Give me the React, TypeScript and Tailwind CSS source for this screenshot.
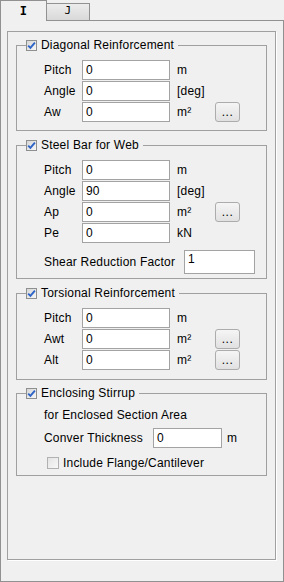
import React from "react";

const Check = ({ checked = true, className = "" }: { checked?: boolean; className?: string }) => (
  <span
    className={`flex w-[11px] h-[11px] shrink-0 items-center justify-center border border-[#8e8f8f] bg-linear-to-br from-[#d6d6d6] to-[#f7f7f7] ${className}`}
  >
    {checked && (
      <svg width="9" height="9" viewBox="0 0 9 9">
        <path d="M1.2 4.6 L3.4 6.8 L7.9 1.6" stroke="#2b63c6" strokeWidth="1.9" fill="none" />
      </svg>
    )}
  </span>
);

const Field = ({ value, className = "" }: { value: string; className?: string }) => (
  <input
    readOnly
    value={value}
    className={`border border-[#a3a3a3] bg-white px-[3px] text-[12px] text-black outline-none ${className}`}
  />
);

const Dots = () => (
  <button className="flex h-[20px] w-[25px] items-end justify-center rounded-[3px] border border-[#acacac] bg-linear-to-b from-[#f5f5f5] to-[#e1e1e1] pb-[4px] text-[12px] leading-[10px] tracking-[0.5px]">
    ...
  </button>
);

const Row = ({
  label,
  value,
  unit,
  button = false,
}: {
  label: string;
  value: string;
  unit: string;
  button?: boolean;
}) => (
  <div className="flex h-[20px] items-center">
    <span className="w-[38px]">{label}</span>
    <Field value={value} className="h-[20px] w-[88px]" />
    <span className="ml-[7px] w-[38px]">{unit}</span>
    {button && <Dots />}
  </div>
);

const Group = ({
  title,
  className = "",
  children,
}: {
  title: string;
  className?: string;
  children: React.ReactNode;
}) => (
  <fieldset className={`border border-[#a0a0a0] px-[9px] pt-[8px] ${className}`}>
    <legend className="pr-[4px]">
      <div className="flex h-[14px] items-center gap-[4px]">
        <Check />
        <span>{title}</span>
      </div>
    </legend>
    {children}
  </fieldset>
);

export default function App() {
  return (
    <div className="h-[582px] w-[284px] bg-[#f0f0f0] font-['Liberation_Sans',Arial,sans-serif] text-[12px] leading-[14px] tracking-[0.2px] text-black">
      {/* tabs */}
      <div className="flex h-[21px]">
        <div className="relative z-10 flex h-[21px] w-[47px] items-center justify-center border-x border-t border-[#919191] bg-[#f0f0f0] font-['DejaVu_Sans_Mono',monospace] text-[12px] font-bold">
          I
        </div>
        <div className="mt-[3px] flex h-[17px] w-[43px] items-center justify-center border-r border-t border-[#919191] bg-linear-to-b from-[#ececec] to-[#d9d9d9] pb-[2px] font-['DejaVu_Sans_Mono',monospace] text-[11px]">
          J
        </div>
      </div>

      {/* outer panel */}
      <div className="-mt-px h-[562px] border border-[#919191] pl-[6px] pr-[7px] pt-[10px]">
        <div className="h-[529px] border border-[#a0a0a0] px-[8px] pt-[6px] shadow-[1px_1px_0_#fff]">
          <Group title="Diagonal Reinforcement" className="pb-[8px]">
            <div className="flex flex-col gap-[1px] pl-[18px]">
              <Row label="Pitch" value="0" unit="m" />
              <Row label="Angle" value="0" unit="[deg]" />
              <Row label="Aw" value="0" unit="m²" button />
            </div>
          </Group>

          <Group title="Steel Bar for Web" className="mt-[7px] pb-[4px]">
            <div className="flex flex-col gap-[1px] pl-[18px]">
              <Row label="Pitch" value="0" unit="m" />
              <Row label="Angle" value="90" unit="[deg]" />
              <Row label="Ap" value="0" unit="m²" button />
              <Row label="Pe" value="0" unit="kN" />
            </div>
            <div className="mt-[7px] flex h-[24px] items-center pl-[18px]">
              <span className="w-[140px]">Shear Reduction Factor</span>
              <Field value="1" className="h-[24px] w-[71px] pb-[6px]" />
            </div>
          </Group>

          <Group title="Torsional Reinforcement" className="mt-[7px] pb-[9px]">
            <div className="flex flex-col gap-[1px] pl-[18px]">
              <Row label="Pitch" value="0" unit="m" />
              <Row label="Awt" value="0" unit="m²" button />
              <Row label="Alt" value="0" unit="m²" button />
            </div>
          </Group>

          <Group title="Enclosing Stirrup" className="mt-[6px] pb-[5px]">
            <div className="pl-[18px]">
              <div className="h-[14px]">for Enclosed Section Area</div>
              <div className="mt-[6px] flex h-[20px] items-center">
                <span className="w-[109px]">Conver Thickness</span>
                <Field value="0" className="h-[20px] w-[69px]" />
                <span className="ml-[5px]">m</span>
              </div>
              <div className="mt-[8px] flex h-[14px] items-center gap-[4px] pl-[3px]">
                <Check checked={false} className="h-[12px] w-[12px] from-[#e4e4e4] to-[#f8f8f8] border-[#b1b1b1]" />
                <span>Include Flange/Cantilever</span>
              </div>
            </div>
          </Group>
        </div>
      </div>
    </div>
  );
}
